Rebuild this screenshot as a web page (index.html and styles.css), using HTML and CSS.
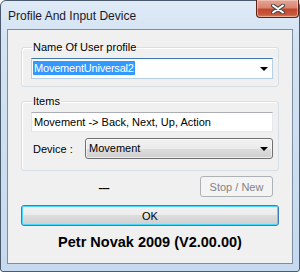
FILE: index.html
```html
<!doctype html>
<html lang="en">

<head>
	<meta charset="UTF-8" />
	<meta name="viewport" content="width=device-width, initial-scale=1.0" />
	<title>Profile And Input Device</title>
	<link rel="stylesheet" href="styles.css">
</head>

<body>
	<div class="window">
		<div class="titlebar">
			<span class="title">Profile And Input Device</span>
			<button class="close" type="button" aria-label="Close">
				<svg width="14" height="10" viewBox="0 0 14 10">
					<path d="M2 1.5 L12 8.5 M12 1.5 L2 8.5" stroke="#4a4a4a" stroke-width="4" stroke-linecap="round" />
					<path d="M2 1.5 L12 8.5 M12 1.5 L2 8.5" stroke="#ffffff" stroke-width="2" stroke-linecap="round" />
				</svg>
			</button>
		</div>

		<div class="client">
			<fieldset class="group group-profile">
				<legend>Name Of User profile</legend>
				<div class="combo combo-edit">
					<span class="combo-text"><span class="selected">MovementUniversal2</span></span>
					<span class="arrow"></span>
				</div>
			</fieldset>

			<fieldset class="group group-items">
				<legend>Items</legend>
				<div class="textbox">Movement -&gt; Back, Next, Up, Action</div>
				<div class="device-row">
					<span class="device-label">Device :</span>
					<div class="combo combo-list">
						<span class="combo-text">Movement</span>
						<span class="arrow"></span>
					</div>
				</div>
			</fieldset>

			<div class="status-row">
				<span class="status">---</span>
				<button class="btn btn-stop" type="button" disabled>Stop / New</button>
			</div>

			<button class="btn btn-ok" type="button">OK</button>

			<p class="credit">Petr Novak 2009 (V2.00.00)</p>
		</div>
	</div>
</body>

</html>
```

FILE: styles.css
```css
body {
	margin: 0;
	font-family: "Liberation Sans", Arial, sans-serif;
	font-size: 11px;
	color: #000;
}

.window {
	width: 300px;
	height: 272px;
	box-sizing: border-box;
	border: 1px solid #4a5a6c;
	border-radius: 6px 6px 3px 3px;
	padding: 0 6px 7px;
	background: linear-gradient(to bottom, #dfeaf6 0, #d3e3f3 40px, #c6d9ee 100%);
	display: flex;
	flex-direction: column;
}

.titlebar {
	height: 28px;
	display: flex;
	align-items: flex-start;
	justify-content: space-between;
}

.title {
	font-size: 12px;
	color: #1a1a2a;
	margin: 8px 0 0 1px;
	line-height: 14px;
}

.close {
	width: 43px;
	height: 18px;
	margin: -1px -6px 0 0;
	padding: 0;
	border: 1px solid #5a2218;
	border-top: none;
	border-radius: 0 0 4px 4px;
	background: linear-gradient(to bottom, #e3a595 0, #d88672 45%, #c4452d 55%, #c65a3e 85%, #d97d5c 100%);
	box-shadow: inset 0 0 0 1px rgba(255, 220, 210, 0.5);
	display: flex;
	align-items: center;
	justify-content: center;
}

.client {
	flex: 1;
	border: 1px solid #7b8ea4;
	background: #f0f0f0;
	display: flex;
	flex-direction: column;
}

.group {
	margin: 11px 13px 0;
	padding: 4px 5px 7px 9px;
	border: 1px solid #d5dfe5;
	border-radius: 3px;
	box-shadow: inset 1px 1px 0 #fff;
	min-width: 0;
}

.group legend {
	padding: 0 1px;
	margin-left: 1px;
	line-height: 13px;
}

.group-items {
	margin-top: 8px;
	padding-bottom: 11px;
}

.combo {
	height: 21px;
	box-sizing: border-box;
	display: flex;
	align-items: center;
	position: relative;
}

.combo-text {
	flex: 1;
	line-height: 13px;
}

.arrow {
	width: 0;
	height: 0;
	border-left: 4px solid transparent;
	border-right: 4px solid transparent;
	border-top: 4px solid #000;
	margin-right: 4px;
}

.combo-edit {
	background: #fff;
	border: 1px solid #b5cfe7;
	border-top-color: #3d7bad;
	padding-left: 1px;
}

.selected {
	background: #3399ff;
	color: #fff;
	padding: 1px;
	letter-spacing: -0.2px;
}

.textbox {
	height: 20px;
	box-sizing: border-box;
	background: #fff;
	border: 1px solid #e3e9ef;
	border-top-color: #abadb3;
	border-left-color: #e2e3ea;
	padding: 3px 2px 0;
	line-height: 13px;
}

.device-row {
	display: flex;
	align-items: center;
	margin-top: 6px;
}

.device-label {
	width: 52px;
	padding-left: 2px;
}

.combo-list {
	flex: 1;
	border: 1px solid #707070;
	border-radius: 3px;
	padding-left: 3px;
	background: linear-gradient(to bottom, #f2f2f2 0, #ebebeb 50%, #dddddd 50%, #cfcfcf 100%);
	box-shadow: inset 0 0 0 1px rgba(255, 255, 255, 0.6);
}

.status-row {
	display: flex;
	align-items: center;
	margin: 5px 19px 0 13px;
}

.status {
	flex: 1;
	text-align: center;
	padding: 3px 14px 0 0;
	font-size: 14px;
	letter-spacing: -1.2px;
}

.btn {
	height: 21px;
	font-family: inherit;
	font-size: 11px;
	border-radius: 3px;
	padding: 0;
}

.btn-stop {
	width: 73px;
	border: 1px solid #adb2b5;
	background: #f4f4f4;
	color: #838383;
}

.btn-ok {
	margin: 8px 13px 0;
	border: 1px solid #3c7fb1;
	box-shadow: inset 0 0 0 1px #48d8fb;
	background: linear-gradient(to bottom, #f2f2f2 0, #ebebeb 50%, #dddddd 50%, #cfcfcf 100%);
	color: #000;
}

.credit {
	margin: 8px 0 0;
	text-align: center;
	font-weight: bold;
	font-size: 14.5px;
	line-height: 17px;
}
```
